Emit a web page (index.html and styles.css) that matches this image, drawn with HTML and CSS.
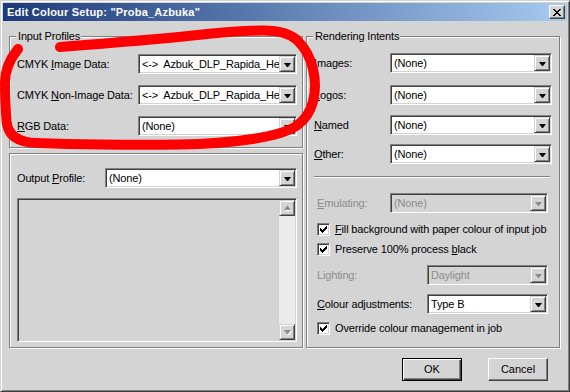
FILE: index.html
```html
<!DOCTYPE html>
<html lang="en">
<head>
  <meta charset="UTF-8" />
  <title>Edit Colour Setup</title>
  <link rel="stylesheet" href="styles.css">
</head>
<body>

  <div class="window">
    <div class="titlebar">
      <span class="title">Edit Colour Setup: "Proba_Azbuka"</span>
      <span class="close-btn">
        <svg width="8" height="7" viewBox="0 0 8 7" shape-rendering="crispEdges"><path d="M0 0h2v1h1v1h2v-1h1v-1h2v1h-1v1h-1v1h-1v1h1v1h1v1h1v1h-2v-1h-1v-1h-2v1h-1v1h-2v-1h1v-1h1v-1h1v-1h-1v-1h-1v-1h-1z" fill="#000"/></svg>
      </span>
    </div>

    <div class="columns">
      <div class="left-col">

        <!-- Input Profiles -->
        <div class="group input-group">
          <div class="group-title">Input Profiles</div>
          <div class="row in-row">
            <span class="lbl in-lbl">CMYK <u>I</u>mage Data:</span>
            <div class="combo in-combo"><span class="val">&lt;-&gt;&nbsp; Azbuk_DLP_Rapida_HeatSet</span><span class="drop"></span></div>
          </div>
          <div class="row in-row">
            <span class="lbl in-lbl">CMYK <u>N</u>on-Image Data:</span>
            <div class="combo in-combo"><span class="val">&lt;-&gt;&nbsp; Azbuk_DLP_Rapida_HeatSet</span><span class="drop"></span></div>
          </div>
          <div class="row in-row">
            <span class="lbl in-lbl"><u>R</u>GB Data:</span>
            <div class="combo in-combo"><span class="val">(None)</span><span class="drop"></span></div>
          </div>
        </div>

        <!-- Output Profile -->
        <div class="group output-group">
          <div class="row out-row">
            <span class="lbl out-lbl">Output <u>P</u>rofile:</span>
            <div class="combo out-combo"><span class="val">(None)</span><span class="drop"></span></div>
          </div>
          <div class="listbox">
            <div class="scrollbar">
              <span class="sbtn up"></span>
              <span class="sbtn down"></span>
            </div>
          </div>
        </div>
      </div>

      <!-- Rendering Intents -->
      <div class="group render-group">
        <div class="group-title">Rendering Intents</div>
        <div class="row ri-row r1">
          <span class="lbl ri-lbl"><u>I</u>mages:</span>
          <div class="combo ri-combo"><span class="val">(None)</span><span class="drop"></span></div>
        </div>
        <div class="row ri-row r2">
          <span class="lbl ri-lbl"><u>L</u>ogos:</span>
          <div class="combo ri-combo"><span class="val">(None)</span><span class="drop"></span></div>
        </div>
        <div class="row ri-row r3">
          <span class="lbl ri-lbl"><u>N</u>amed</span>
          <div class="combo ri-combo"><span class="val">(None)</span><span class="drop"></span></div>
        </div>
        <div class="row ri-row r4">
          <span class="lbl ri-lbl"><u>O</u>ther:</span>
          <div class="combo ri-combo"><span class="val">(None)</span><span class="drop"></span></div>
        </div>

        <div class="separator"></div>

        <div class="lower">
          <div class="row emu-row">
            <span class="lbl emu-lbl disabled-text"><u>E</u>mulating:</span>
            <div class="combo emu-combo disabled"><span class="val">(None)</span><span class="drop"></span></div>
          </div>
          <div class="check-row c1">
            <span class="cb"><svg width="7" height="7" viewBox="0 0 7 7" shape-rendering="crispEdges"><path d="M0 2H1V3H2V4H3V3H4V2H5V1H6V0H7V3H6V4H5V5H4V6H3V7H2V6H1V5H0Z" fill="#000"/></svg></span>
            <span class="cb-text"><u>F</u>ill background with paper colour of input job</span>
          </div>
          <div class="check-row c2">
            <span class="cb"><svg width="7" height="7" viewBox="0 0 7 7" shape-rendering="crispEdges"><path d="M0 2H1V3H2V4H3V3H4V2H5V1H6V0H7V3H6V4H5V5H4V6H3V7H2V6H1V5H0Z" fill="#000"/></svg></span>
            <span class="cb-text">Preserve 100% process <u>b</u>lack</span>
          </div>
          <div class="row light-row">
            <span class="lbl light-lbl disabled-text">Lighting:</span>
            <div class="combo small-combo disabled"><span class="val">Daylight</span><span class="drop"></span></div>
          </div>
          <div class="row adj-row">
            <span class="lbl light-lbl"><u>C</u>olour adjustments:</span>
            <div class="combo small-combo"><span class="val">Type B</span><span class="drop"></span></div>
          </div>
          <div class="check-row c3">
            <span class="cb"><svg width="7" height="7" viewBox="0 0 7 7" shape-rendering="crispEdges"><path d="M0 2H1V3H2V4H3V3H4V2H5V1H6V0H7V3H6V4H5V5H4V6H3V7H2V6H1V5H0Z" fill="#000"/></svg></span>
            <span class="cb-text">Override colour management in job</span>
          </div>
        </div>
      </div>
    </div>

    <div class="buttons">
      <button class="btn default">OK</button>
      <button class="btn">Cancel</button>
    </div>

    <!-- red marker scribble over the input profiles -->
    <svg class="scribble" width="570" height="392" viewBox="0 0 570 392">
      <defs>
        <filter id="soft"><feGaussianBlur stdDeviation="0.6"/></filter>
      </defs>
      <path d="M60 47 Q150 40 192.5 35.5 Q235 31 261 30.5 Q287 30 298 41 Q309 52 313 69 Q317 86 313 101.5 Q309 117 297 125.5 Q285 134 252.5 139 Q220 144 180 144.5 Q140 145 102.5 144.5 Q65 144 36.5 143 Q8 142 6.5 121 Q5 100 5 82.5 Q5 65 18 49"
            fill="none" stroke="#ff0000" stroke-width="10" stroke-linecap="round" stroke-linejoin="round" filter="url(#soft)"/>
    </svg>
  </div>

</body>
</html>
```

FILE: styles.css
```css
* {
  box-sizing: border-box;
  margin: 0;
  padding: 0;
}
body {
  font-family: 'Liberation Sans', Arial, sans-serif;
  font-size: 11px;
  letter-spacing: -0.15px;
  color: #000;
  background: #d4d4d4;
}

/* Window frame */
.window {
  position: relative;
  width: 570px;
  height: 392px;
  background: #d4d4d4;
  border: 1px solid;
  border-color: #d4d4d4 #404040 #404040 #d4d4d4;
  box-shadow: inset 1px 1px #fff, inset -1px -1px #808080;
  padding: 2px;
}

.titlebar {
  height: 18px;
  display: flex;
  align-items: center;
  justify-content: space-between;
  background: linear-gradient(to right, #1c3a7a, #a6caf0);
  padding: 0 2px 0 4px;
}
.title {
  color: #fff;
  font-weight: bold;
  font-size: 11px;
  letter-spacing: 0.2px;
}
.close-btn {
  width: 16px;
  height: 14px;
  display: flex;
  align-items: center;
  justify-content: center;
  background: #d4d4d4;
  border: 1px solid;
  border-color: #fff #404040 #404040 #fff;
  box-shadow: inset -1px -1px #808080;
}

/* Columns */
.columns {
  display: flex;
  gap: 3px;
  padding: 15px 0 0 6px;
}
.left-col {
  width: 294px;
  display: flex;
  flex-direction: column;
  gap: 5px;
}

/* Group boxes */
.group {
  border: 1px solid #808080;
  box-shadow: inset 1px 1px #fff, 1px 1px #fff;
}
.group-title {
  width: fit-content;
  margin: -7px 0 0 -1px;
  padding: 0 1px 0 2px;
  line-height: 13px;
  background: #d4d4d4;
}
.input-group {
  height: 112px;
  padding: 0 5px 0 7px;
}
.output-group {
  height: 195px;
  padding: 0 5px 0 7px;
}
.render-group {
  width: 254px;
  height: 312px;
  padding: 0 0 0 7px;
}

/* Rows */
.row {
  display: flex;
  align-items: center;
  height: 20px;
}
.lbl {
  flex: none;
  line-height: 20px;
  white-space: nowrap;
}
.in-row { margin-top: 11px; }
.in-lbl { width: 121px; }
.in-combo { width: 159px; }

.out-row { margin-top: 14px; }
.out-lbl { width: 88px; }
.out-combo { width: 192px; }

.ri-lbl { width: 76px; }
.ri-combo { width: 162px; }
.r1 { margin-top: 10px; }
.r2 { margin-top: 12px; }
.r3 { margin-top: 10px; }
.r4 { margin-top: 9px; }

.separator {
  width: 236px;
  height: 2px;
  margin-top: 12px;
  border-top: 1px solid #808080;
  border-bottom: 1px solid #fff;
}

.lower {
  padding-left: 3px;
}
.emu-row { margin-top: 15px; }
.emu-lbl { width: 73px; }
.emu-combo { width: 158px; }
.light-row { margin-top: 9px; }
.adj-row { margin-top: 9px; }
.light-lbl { width: 110px; }
.small-combo { width: 121px; }

.disabled-text {
  color: #8c8c8c;
}

/* Combo boxes */
.combo {
  flex: none;
  display: flex;
  height: 20px;
  padding: 1px;
  background: #fff;
  border: 1px solid;
  border-color: #808080 #fff #fff #808080;
  box-shadow: inset 1px 1px #404040, inset -1px -1px #d4d4d4;
}
.combo .val {
  flex: 1;
  overflow: hidden;
  white-space: nowrap;
  padding-left: 2px;
  line-height: 16px;
}
.drop {
  flex: none;
  width: 16px;
  height: 16px;
  display: flex;
  align-items: center;
  justify-content: center;
  background: #d4d4d4;
  border: 1px solid;
  border-color: #d4d4d4 #404040 #404040 #d4d4d4;
  box-shadow: inset 1px 1px #fff, inset -1px -1px #808080;
}
.drop::after {
  content: "";
  width: 1px;
  height: 0;
  margin-top: 1px;
  border-top: 4px solid #000;
  border-left: 3px solid transparent;
  border-right: 3px solid transparent;
}
.combo.disabled {
  background: #d4d4d4;
  color: #8c8c8c;
}
.combo.disabled .drop::after {
  border-top-color: #8c8c8c;
}

/* List box */
.listbox {
  margin-top: 10px;
  width: 280px;
  height: 144px;
  display: flex;
  justify-content: flex-end;
  padding: 1px;
  background: #d4d4d4;
  border: 1px solid;
  border-color: #808080 #fff #fff #808080;
  box-shadow: inset 1px 1px #404040, inset -1px -1px #d4d4d4;
}
.scrollbar {
  width: 16px;
  display: flex;
  flex-direction: column;
  justify-content: space-between;
  background: #ebebeb;
}
.sbtn {
  width: 16px;
  height: 16px;
  display: flex;
  align-items: center;
  justify-content: center;
  background: #d4d4d4;
  border: 1px solid;
  border-color: #d4d4d4 #404040 #404040 #d4d4d4;
  box-shadow: inset 1px 1px #fff, inset -1px -1px #808080;
}
.sbtn::after {
  content: "";
  width: 1px;
  height: 0;
  border-left: 3px solid transparent;
  border-right: 3px solid transparent;
}
.sbtn.up::after {
  border-bottom: 4px solid #8c8c8c;
  filter: drop-shadow(1px 1px 0 #fff);
}
.sbtn.down::after {
  border-top: 4px solid #8c8c8c;
  filter: drop-shadow(1px 1px 0 #fff);
}

/* Check boxes */
.check-row {
  display: flex;
  align-items: center;
  height: 13px;
}
.c1 { margin-top: 10px; }
.c2 { margin-top: 7px; }
.c3 { margin-top: 8px; }
.cb {
  flex: none;
  width: 13px;
  height: 13px;
  display: flex;
  align-items: center;
  justify-content: center;
  background: #fff;
  border: 1px solid;
  border-color: #808080 #fff #fff #808080;
  box-shadow: inset 1px 1px #404040, inset -1px -1px #d4d4d4;
}
.cb-text {
  margin-left: 5px;
  line-height: 13px;
  white-space: nowrap;
}

/* Buttons */
.buttons {
  display: flex;
  justify-content: flex-end;
  gap: 26px;
  margin-top: 10px;
  padding-right: 19px;
}
.btn {
  width: 60px;
  height: 23px;
  font-family: 'Liberation Sans', Arial, sans-serif;
  font-size: 11px;
  color: #000;
  background: #d4d4d4;
  border: 1px solid;
  border-color: #fff #404040 #404040 #fff;
  box-shadow: inset -1px -1px #808080;
  padding-bottom: 1px;
}
.btn.default {
  border-color: #000;
  box-shadow: inset 1px 1px #fff, inset -1px -1px #404040, inset -2px -2px #808080;
}

/* Marker scribble */
.scribble {
  position: absolute;
  left: -1px;
  top: -1px;
  pointer-events: none;
}
```
